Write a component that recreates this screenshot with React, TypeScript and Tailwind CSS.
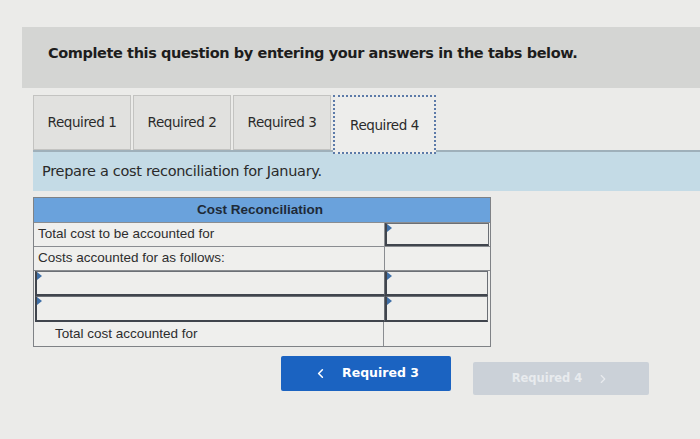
import { ChevronLeft, ChevronRight } from "lucide-react";

const tabs = ["Required 1", "Required 2", "Required 3", "Required 4"];

function Marker() {
  return (
    <span className="absolute left-0 top-0 w-0 h-0 border-t-[4px] border-b-[4px] border-l-[5px] border-t-transparent border-b-transparent border-l-[#3f6fa6]" />
  );
}

function InputCell({ className = "" }: { className?: string }) {
  return (
    <div className={`relative bg-[#eeeeec] border border-[#6b6f75] border-l-2 border-b-2 border-l-[#40454d] border-b-[#40454d] ${className}`}>
      <Marker />
    </div>
  );
}

export default function App() {
  return (
    <div
      className="w-[700px] h-[439px] bg-[#ebebe9] overflow-hidden pt-[27px]"
      style={{ fontFamily: '"DejaVu Sans", Verdana, sans-serif' }}
    >
      {/* header */}
      <div className="ml-[22px] h-[61px] bg-[#d4d5d3] flex items-center pl-[26px] pb-[8px]">
        <p className="text-[14.5px] font-bold text-[#1d1d1d] tracking-[-0.4px]">
          Complete this question by entering your answers in the tabs below.
        </p>
      </div>

      {/* tabs */}
      <div className="ml-[33px] mt-[4px] flex items-end h-[58px]">
        {tabs.map((t, i) =>
          i === 3 ? (
            <div
              key={t}
              className="w-[103px] h-[59px] -mb-[4px] relative z-10 bg-[#ededeb] border-2 border-dotted border-[#5c7aa8] flex items-center justify-center pt-[2px] text-[13.5px] text-[#2a2a2a] tracking-[-0.4px]"
            >
              {t}
            </div>
          ) : (
            <div
              key={t}
              className="w-[98px] h-[55px] mr-[2px] bg-[#e1e1df] border border-[#c3c3c1] flex items-center justify-center text-[13.5px] text-[#2a2a2a] tracking-[-0.4px]"
            >
              {t}
            </div>
          )
        )}
      </div>

      {/* instruction band */}
      <div className="ml-[33px] h-[41px] bg-[#c4dbe6] border-t-2 border-[#9fb0ba] flex items-center pl-[9px]">
        <p className="text-[14.5px] text-[#2a2a2a] tracking-[-0.3px]">Prepare a cost reconciliation for January.</p>
      </div>

      {/* table */}
      <div
        className="ml-[33px] mt-[6px] w-[458px] border border-[#7f8286] bg-[#efefed]"
        style={{ fontFamily: '"Liberation Sans", Arial, sans-serif' }}
      >
        <div className="h-[24px] bg-[#6aa2dc] flex items-center justify-center text-[13.5px] font-bold text-[#1e2a38] pr-[4px]">
          Cost Reconciliation
        </div>
        <div className="flex h-[24px] border-t border-[#8a8d91]">
          <div className="w-[351px] border-r border-[#8a8d91] flex items-center pl-[4px] text-[13.5px] text-[#2d2d2d]">
            Total cost to be accounted for
          </div>
          <InputCell className="flex-1 mr-[1px]" />
        </div>
        <div className="flex h-[24px] border-t border-[#8a8d91]">
          <div className="w-[351px] border-r border-[#8a8d91] flex items-center pl-[4px] text-[13.5px] text-[#2d2d2d]">
            Costs accounted for as follows:
          </div>
          <div className="flex-1" />
        </div>
        <div className="flex h-[26px] border-t border-[#8a8d91]">
          <InputCell className="w-[350px] ml-[1px]" />
          <InputCell className="flex-1 mr-[2px]" />
        </div>
        <div className="flex h-[26px]">
          <InputCell className="w-[350px] ml-[1px]" />
          <InputCell className="flex-1 mr-[2px]" />
        </div>
        <div className="flex h-[24px]">
          <div className="w-[350px] border-r border-[#8a8d91] flex items-center pl-[21px] text-[13.5px] text-[#2d2d2d]">
            Total cost accounted for
          </div>
          <div className="flex-1" />
        </div>
      </div>

      {/* nav buttons */}
      <div className="flex ml-[281px] mt-[9px] items-start">
        <div className="w-[170px] h-[35px] bg-[#1b63c1] rounded-[2px] flex items-center justify-center gap-[14px] text-white text-[12.5px] font-bold">
          <ChevronLeft size={15} strokeWidth={2.5} />
          <span>Required 3</span>
        </div>
        <div className="ml-[22px] mt-[6px] w-[176px] h-[33px] bg-[#cbd1d8] rounded-[2px] flex items-center justify-center gap-[14px] text-[#e8ebee] text-[11.5px] font-bold">
          <span>Required 4</span>
          <ChevronRight size={14} strokeWidth={2} />
        </div>
      </div>
    </div>
  );
}
